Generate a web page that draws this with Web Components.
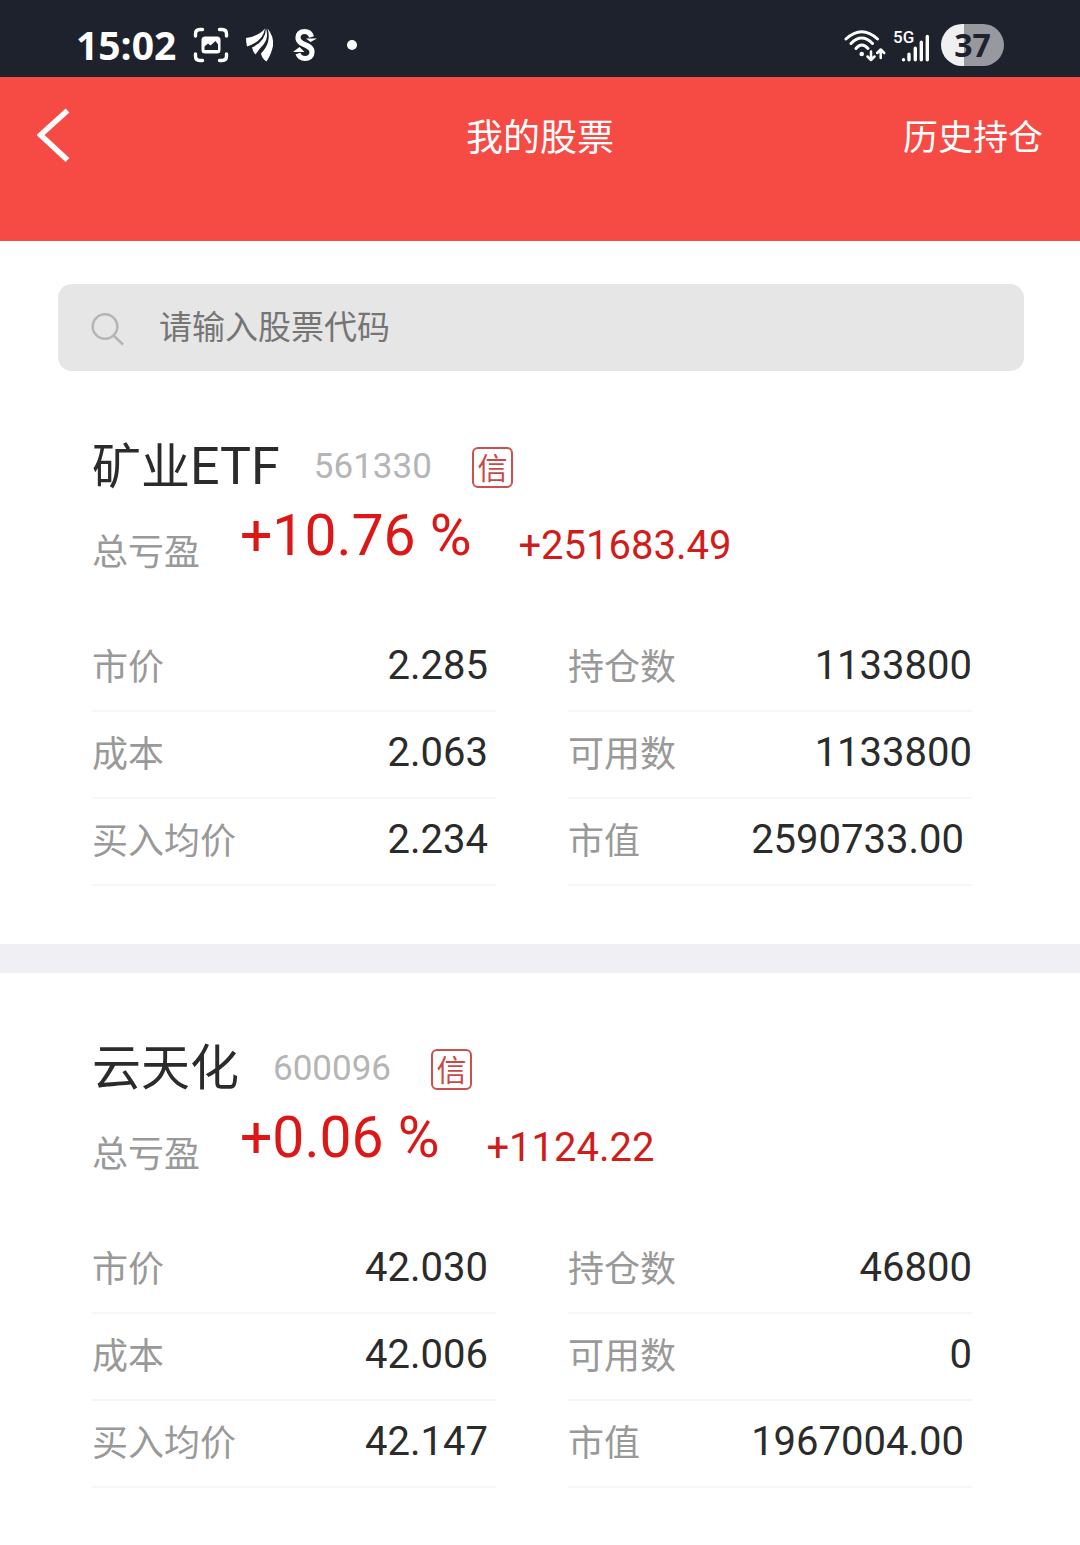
<!DOCTYPE html>
<html lang="zh-CN">
<head>
<meta charset="utf-8">
<meta name="viewport" content="width=device-width, initial-scale=1">
<title>我的股票</title>
<style>
  body {
    margin: 0;
    background: #fff;
    color: #2b2b2b;
    font-family: Roboto, "Noto Sans CJK SC", sans-serif;
  }
</style>
</head>
<body>
<stock-app></stock-app>

<script>
class StatusBar extends HTMLElement {
  constructor() {
    super();
    this.attachShadow({ mode: "open" });
  }

  connectedCallback() {
    this.shadowRoot.innerHTML = `
      <style>
        :host {
          display: flex;
          align-items: center;
          justify-content: space-between;
          height: 77px;
          padding: 12px 76px 0 76px;
          box-sizing: border-box;
          background: #1e222c;
          color: #fff;
        }
        div {
          display: flex;
          align-items: center;
        }
        svg {
          display: block;
          flex: none;
        }
        time {
          font: 700 39px/40px "Open Sans", sans-serif;
        }
        .left {
          gap: 17px;
        }
        .right {
          gap: 7px;
        }
        .battery {
          width: 63px;
          height: 42px;
          margin-left: 4px;
          border-radius: 21px;
          justify-content: center;
          background: linear-gradient(90deg, #f0f0f2 23px, #98999e 23px);
          color: #1e222c;
          font: 700 32px/42px "Open Sans", sans-serif;
        }
      </style>
      <div class="left">
        <time>15:02</time>
        <svg width="36" height="36" viewBox="0 0 36 36" fill="none" stroke="#fff" stroke-width="3.4" stroke-linecap="round" stroke-linejoin="round">
          <path d="M2.5 9V7q0-4.500 4.500-4.500H9.500M26.500 2.500H29q4.500 0 4.500 4.500V9M33.500 27v2q0 4.500-4.500 4.500H26.500M9.500 33.500H7q-4.500 0-4.500-4.500V27"/>
          <rect x="8.500" y="9.500" width="19" height="17" rx="3.500" fill="#fff" stroke="none"/>
          <path d="M11.500 23v-3.500l3.500-3 2.500 2 5-4.500 2.500 3.500V23z" fill="#1e222c" stroke="none"/>
        </svg>
        <svg width="30" height="36" viewBox="2 0 30 36" fill="#fff">
          <path d="M2 11Q15 9 21 1.500Q19 14.500 3 19.500Q2 15 2 11z"/>
          <path d="M22 1.500Q25 10 19.500 17.500Q15 22 11.500 27.500Q9 25 8 20.500Q21.500 14.500 22 1.500z"/>
          <path d="M23.500 1.500Q30 9 29 19Q27 28 22.500 34.500Q18 32 17 26.500Q28 15 23.500 1.500z"/>
        </svg>
        <svg width="24" height="36" viewBox="0 0 24 36" fill="none" stroke="#fff" stroke-width="5.200">
          <path d="M18.500 10C17.500 6 14.500 4.500 11.500 4.500c-4 0-6.500 2.500-6.500 6 0 8.500 14 6 14 14.500 0 4-3 6.500-7 6.500-3.500 0-6-2-7-5"/>
          <path d="M13 11.500h11L17.500 15zM0 25l6.500-5 5 5z" fill="#fff" stroke="none"/>
        </svg>
        <svg width="36" height="36" viewBox="0 0 36 36" fill="#fff"><circle cx="18" cy="18" r="5"/></svg>
      </div>
      <div class="right">
        <svg width="43" height="36" viewBox="0 0 43 36" fill="none" stroke="#fff" stroke-width="3" stroke-linecap="round" stroke-linejoin="round">
          <path d="M3 12Q18.700 -2.500 34.500 12M8 16.500Q18.700 5.500 29.500 16.500M13 21.500Q18.700 14.500 25 21.500"/>
          <circle cx="18.700" cy="27" r="2.300" fill="#fff" stroke="none"/>
          <path d="M28 24.500v8.500M24.500 29.500l3.500 3.500 3.500-3.500M37.700 31v-8.500M34.200 26l3.500-3.500 3.500 3.500" stroke-width="2.500"/>
        </svg>
        <svg width="37" height="36" viewBox="0 0 37 36" fill="none" stroke="#fff" stroke-width="3.400" stroke-linecap="round">
          <text x="0" y="16" fill="#fff" stroke="none" font-family="Roboto, sans-serif" font-size="17" font-weight="500">5G</text>
          <path d="M10.500 32.800v0M16 32.800v-5.500M22.300 32.800v-11.500M28.300 32.800v-17.500M34.300 32.800V9.500"/>
        </svg>
        <div class="battery">37</div>
      </div>
    `;
  }
}

class NavBar extends HTMLElement {
  constructor() {
    super();
    this.attachShadow({ mode: "open" });
  }

  connectedCallback() {
    this.shadowRoot.innerHTML = `
      <style>
        :host {
          display: grid;
          grid-template-columns: 1fr auto 1fr;
          align-items: start;
          padding: 27px 37px 67px;
          box-sizing: border-box;
          background: #f64a45;
          color: #fff;
        }
        button {
          display: flex;
          align-items: center;
          justify-self: start;
          height: 62px;
          padding: 0;
          border: 0;
          background: none;
        }
        h1 {
          margin: 0;
          font-size: 37px;
          line-height: 70px;
          font-weight: 400;
        }
        a {
          justify-self: end;
          color: inherit;
          font-size: 35px;
          line-height: 70px;
          text-decoration: none;
        }
      </style>
      <button type="button" aria-label="返回">
        <svg width="34" height="56" viewBox="1 0 34 56" fill="none" stroke="#fff" stroke-width="5.500">
          <path d="M31.500 3.500L4.500 28l27 25"/>
        </svg>
      </button>
      <h1><slot></slot></h1>
      <a href="#history"><slot name="action"></slot></a>
    `;
  }
}

class StockSearch extends HTMLElement {
  constructor() {
    super();
    this.attachShadow({ mode: "open" });
  }

  connectedCallback() {
    const hint = this.getAttribute("placeholder");

    this.shadowRoot.innerHTML = `
      <style>
        :host {
          display: block;
          padding: 43px 56px 0 58px;
        }
        label {
          display: flex;
          align-items: center;
          gap: 33px;
          height: 87px;
          padding: 0 32px;
          box-sizing: border-box;
          border-radius: 14px;
          background: #e6e6e6;
        }
        svg {
          flex: none;
        }
        input {
          flex: 1;
          min-width: 0;
          padding: 0;
          border: 0;
          outline: 0;
          background: none;
          color: #2b2b2b;
          font-family: inherit;
          font-size: 33px;
          line-height: 48px;
        }
        input::placeholder {
          color: #757575;
          opacity: 1;
        }
      </style>
      <label>
        <svg width="36" height="36" viewBox="0 0 36 36" fill="none" stroke="#b5b5b5" stroke-width="2.500">
          <circle cx="15" cy="16.500" r="12.300"/>
          <path d="M23.500 25.500l9.500 9"/>
        </svg>
        <input type="text" placeholder="${hint}" aria-label="${hint}">
      </label>
    `;
  }
}

class StockField extends HTMLElement {
  constructor() {
    super();
    this.attachShadow({ mode: "open" });
  }

  connectedCallback() {
    this.shadowRoot.innerHTML = `
      <style>
        :host {
          display: flex;
          align-items: center;
          justify-content: space-between;
          height: 87px;
          padding-bottom: 3px;
          box-sizing: border-box;
          border-bottom: 2px solid #f6f6f6;
        }
        .label {
          padding-top: 4px;
          color: #999;
          font-size: 36px;
          line-height: 52px;
        }
        .value {
          font-size: 40px;
          line-height: 52px;
        }
        :host([inset]) .value {
          padding-right: 8px;
        }
      </style>
      <span class="label">${this.getAttribute("label")}</span>
      <span class="value"><slot></slot></span>
    `;
  }
}

class StockCard extends HTMLElement {
  constructor() {
    super();
    this.attachShadow({ mode: "open" });
  }

  set data(stock) {
    this._data = stock;
    this.render();
  }

  render() {
    if (!this._data) return;

    const { name, suffix, code, percent, profit, left, right } = this._data;
    const field = f => `<stock-field label="${f.label}" ${f.inset ? "inset" : ""}>${f.value}</stock-field>`;

    this.shadowRoot.innerHTML = `
      <style>
        :host {
          display: block;
          padding: 65px 108px 58px 92px;
        }
        header {
          display: flex;
          align-items: center;
          height: 62px;
        }
        h2 {
          margin: 0 34px 0 0;
          font-size: 49px;
          line-height: 64px;
          font-weight: 400;
        }
        h2 span {
          font-size: 52px;
        }
        .code {
          margin-right: 40px;
          color: #b5b5b5;
          font-size: 35px;
          line-height: 62px;
        }
        .badge {
          width: 41px;
          height: 41px;
          box-sizing: border-box;
          border: 2px solid #cb5050;
          border-radius: 6px;
          color: #c94848;
          font-size: 30px;
          line-height: 40px;
          text-align: center;
        }
        .profit {
          display: flex;
          align-items: flex-end;
          margin-bottom: 51px;
          color: #d11c1c;
        }
        .profit .label {
          margin-right: 40px;
          color: #999;
          font-size: 36px;
          line-height: 42px;
        }
        .percent {
          margin-right: 47px;
          color: #dc1717;
          font-size: 57px;
          line-height: 76px;
        }
        .amount {
          font-size: 40px;
          line-height: 56px;
        }
        .fields {
          display: grid;
          grid-template-columns: 1fr 1fr;
          gap: 72px;
        }
      </style>
      <header>
        <h2>${name}${suffix ? `<span>${suffix}</span>` : ""}</h2>
        <span class="code">${code}</span>
        <span class="badge">信</span>
      </header>
      <div class="profit">
        <span class="label">总亏盈</span>
        <span class="percent">${percent} %</span>
        <span class="amount">${profit}</span>
      </div>
      <div class="fields">
        <div>${left.map(field).join("")}</div>
        <div>${right.map(field).join("")}</div>
      </div>
    `;
  }
}

const stocks = [
  {
    name: "矿业",
    suffix: "ETF",
    code: "561330",
    percent: "+10.76",
    profit: "+251683.49",
    left: [
      { label: "市价", value: "2.285", inset: true },
      { label: "成本", value: "2.063", inset: true },
      { label: "买入均价", value: "2.234", inset: true }
    ],
    right: [
      { label: "持仓数", value: "1133800" },
      { label: "可用数", value: "1133800" },
      { label: "市值", value: "2590733.00", inset: true }
    ]
  },
  {
    name: "云天化",
    code: "600096",
    percent: "+0.06",
    profit: "+1124.22",
    left: [
      { label: "市价", value: "42.030", inset: true },
      { label: "成本", value: "42.006", inset: true },
      { label: "买入均价", value: "42.147", inset: true }
    ],
    right: [
      { label: "持仓数", value: "46800" },
      { label: "可用数", value: "0" },
      { label: "市值", value: "1967004.00", inset: true }
    ]
  }
];

class StockApp extends HTMLElement {
  constructor() {
    super();
    this.attachShadow({ mode: "open" });
  }

  connectedCallback() {
    this.shadowRoot.innerHTML = `
      <style>
        :host {
          display: block;
        }
        stock-card + stock-card {
          border-top: 29px solid #efeff4;
        }
      </style>
      <status-bar></status-bar>
      <nav-bar>我的股票<span slot="action">历史持仓</span></nav-bar>
      <main>
        <stock-search placeholder="请输入股票代码"></stock-search>
      </main>
    `;

    const main = this.shadowRoot.querySelector("main");
    stocks.forEach(stock => {
      const card = document.createElement("stock-card");
      card.data = stock;
      main.appendChild(card);
    });
  }
}

customElements.define("status-bar", StatusBar);
customElements.define("nav-bar", NavBar);
customElements.define("stock-search", StockSearch);
customElements.define("stock-field", StockField);
customElements.define("stock-card", StockCard);
customElements.define("stock-app", StockApp);
</script>
</body>
</html>
